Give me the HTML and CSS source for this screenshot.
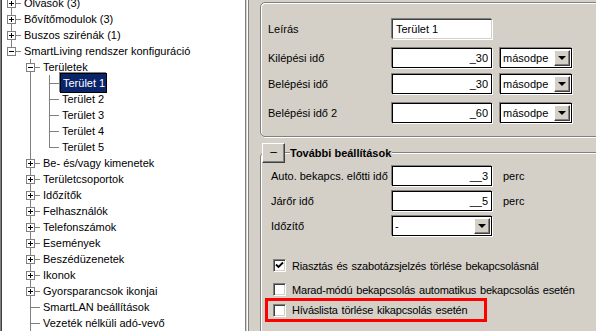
FILE: index.html
```html
<!DOCTYPE html>
<html>
<head>
<meta charset="utf-8">
<link rel="stylesheet" href="styles.css">
</head>
<body>
<div class="app">
  <div class="tree">
    <div class="list">
      <div class="row"><span class="g tee"><i class="box plus"></i></span><span class="lbl">Olvasók (3)</span></div>
      <div class="row"><span class="g tee"><i class="box plus"></i></span><span class="lbl">Bővítőmodulok (3)</span></div>
      <div class="row"><span class="g tee"><i class="box plus"></i></span><span class="lbl">Buszos szirénák (1)</span></div>
      <div class="row"><span class="g ell"><i class="box minus"></i></span><span class="lbl">SmartLiving rendszer konfiguráció</span></div>
      <div class="row"><span class="g"></span><span class="g tee"><i class="box minus"></i></span><span class="lbl">Területek</span></div>
      <div class="row"><span class="g"></span><span class="g pipe"></span><span class="g tee"></span><span class="lbl sel">Terület 1</span></div>
      <div class="row"><span class="g"></span><span class="g pipe"></span><span class="g tee"></span><span class="lbl">Terület 2</span></div>
      <div class="row"><span class="g"></span><span class="g pipe"></span><span class="g tee"></span><span class="lbl">Terület 3</span></div>
      <div class="row"><span class="g"></span><span class="g pipe"></span><span class="g tee"></span><span class="lbl">Terület 4</span></div>
      <div class="row"><span class="g"></span><span class="g pipe"></span><span class="g ell"></span><span class="lbl">Terület 5</span></div>
      <div class="row"><span class="g"></span><span class="g tee"><i class="box plus"></i></span><span class="lbl">Be- és/vagy kimenetek</span></div>
      <div class="row"><span class="g"></span><span class="g tee"><i class="box plus"></i></span><span class="lbl">Területcsoportok</span></div>
      <div class="row"><span class="g"></span><span class="g tee"><i class="box plus"></i></span><span class="lbl">Időzítők</span></div>
      <div class="row"><span class="g"></span><span class="g tee"><i class="box plus"></i></span><span class="lbl">Felhasználók</span></div>
      <div class="row"><span class="g"></span><span class="g tee"><i class="box plus"></i></span><span class="lbl">Telefonszámok</span></div>
      <div class="row"><span class="g"></span><span class="g tee"><i class="box plus"></i></span><span class="lbl">Események</span></div>
      <div class="row"><span class="g"></span><span class="g tee"><i class="box plus"></i></span><span class="lbl">Beszédüzenetek</span></div>
      <div class="row"><span class="g"></span><span class="g tee"><i class="box plus"></i></span><span class="lbl">Ikonok</span></div>
      <div class="row"><span class="g"></span><span class="g tee"><i class="box plus"></i></span><span class="lbl">Gyorsparancsok ikonjai</span></div>
      <div class="row"><span class="g"></span><span class="g tee"></span><span class="lbl">SmartLAN beállítások</span></div>
      <div class="row"><span class="g"></span><span class="g tee"></span><span class="lbl">Vezeték nélküli adó-vevő</span></div>
      <div class="row"><span class="g"></span><span class="g pipe"></span></div>
    </div>
  </div>
  <div class="splitter"></div>
  <div class="panel">
    <div class="group1">
      <div class="frow r1"><span class="lab">Leírás</span><span class="inp sunk">Terület 1</span></div>
      <div class="frow r2"><span class="lab">Kilépési idő</span><span class="inp num">_30</span><span class="sel unit"><span class="stext">másodpe</span><span class="arrow"></span></span></div>
      <div class="frow r3"><span class="lab">Belépési idő</span><span class="inp num">_30</span><span class="sel unit"><span class="stext">másodpe</span><span class="arrow"></span></span></div>
      <div class="frow r4"><span class="lab">Belépési idő 2</span><span class="inp num">_60</span><span class="sel unit"><span class="stext">másodpe</span><span class="arrow"></span></span></div>
    </div>
    <div class="group2">
      <div class="g2head"><span class="tgl">–</span><span class="gtitle">További beállítások</span></div>
      <div class="frow s1"><span class="lab2">Auto. bekapcs. előtti idő</span><span class="inp num">__3</span><span class="unitlbl">perc</span></div>
      <div class="frow s2"><span class="lab2">Járőr idő</span><span class="inp num">__5</span><span class="unitlbl">perc</span></div>
      <div class="frow s3"><span class="lab2">Időzítő</span><span class="sel wide"><span class="stext">-</span><span class="arrow"></span></span></div>
      <div class="cbrow c1"><span class="cb checked"><svg width="9" height="9" viewBox="0 0 9 9"><path d="M1 3.5 L3.5 6 L8 1.5" fill="none" stroke="#000" stroke-width="1.8"/></svg></span><span class="cbl">Riasztás és szabotázsjelzés törlése bekapcsolásnál</span></div>
      <div class="cbrow c2"><span class="cb"></span><span class="cbl">Marad-módú bekapcsolás automatikus bekapcsolás esetén</span></div>
      <div class="redbox"><span class="cb"></span><span class="cbl">Híváslista törlése kikapcsolás esetén</span></div>
    </div>
  </div>
</div>
</body>
</html>
```
FILE: styles.css
```css
html, body { margin: 0; padding: 0; }
body {
  font-family: "Liberation Sans", Arial, sans-serif;
  font-size: 11px;
  color: #000;
  background: #d4d0c8;
}
.app {
  display: flex;
  width: 596px;
  height: 331px;
  overflow: hidden;
}
.tree {
  width: 246px;
  flex: none;
  box-sizing: border-box;
  background: #fff;
  border-left: 1px solid #808080;
  border-right: 1px solid #808080;
  box-shadow: inset 1px 0 0 #404040;
  padding-left: 1px;
  overflow: hidden;
}
.list { margin-top: -5px; }
.row {
  display: flex;
  align-items: center;
  height: 16px;
  white-space: nowrap;
}
.g {
  width: 19px;
  height: 16px;
  flex: none;
  position: relative;
}
.g.pipe::before, .g.tee::before, .g.ell::before {
  content: "";
  position: absolute;
  left: 9px;
  top: 0;
  width: 1px;
  height: 16px;
  background: #808080;
}
.g.ell::before { height: 9px; }
.g.tee::after, .g.ell::after {
  content: "";
  position: absolute;
  left: 9px;
  right: 0;
  top: 8px;
  height: 1px;
  background: #808080;
}
.box {
  position: absolute;
  left: 5px;
  top: 4px;
  width: 9px;
  height: 9px;
  box-sizing: border-box;
  border: 1px solid #808080;
  background: #fff;
  z-index: 1;
}
.box::before {
  content: "";
  position: absolute;
  left: 1px;
  top: 3px;
  width: 5px;
  height: 1px;
  background: #000;
}
.box.plus::after {
  content: "";
  position: absolute;
  left: 3px;
  top: 1px;
  width: 1px;
  height: 5px;
  background: #000;
}
.lbl {
  margin-left: 1px;
  padding: 0 2px;
  line-height: 14px;
  height: 14px;
}
.lbl.sel {
  background: #0a246a;
  color: #fff;
}
.splitter {
  width: 6px;
  flex: none;
  background: linear-gradient(to right, #d4d0c8 0 1px, #fff 1px 2px, #808080 2px 3px, #d4d0c8 3px);
}
.panel {
  flex: 1;
  min-width: 0;
  padding: 2px 0 0 8px;
  overflow: hidden;
}
.group1 {
  height: 135px;
  box-sizing: border-box;
  border: 1px solid #808080;
  border-radius: 5px;
  box-shadow: inset 1px 1px 0 #fff, 1px 1px 0 #fff;
  margin-right: -12px;
  padding: 16px 0 0 7px;
}
.frow {
  display: flex;
  align-items: center;
  height: 20px;
}
.r2 { margin-top: 9px; }
.r3 { margin-top: 6px; }
.r4 { margin-top: 9px; }
.lab { width: 124px; flex: none; }
.inp {
  width: 100px;
  height: 20px;
  box-sizing: border-box;
  flex: none;
  background: #fff;
  border: 1px solid #000;
  box-shadow: -1px -1px 0 #808080, 1px 1px 0 #fff;
  line-height: 18px;
  padding: 0 3px;
  white-space: nowrap;
}
.inp.sunk {
  border-color: #404040 #d4d0c8 #d4d0c8 #404040;
}
.inp.num { text-align: right; }
.sel {
  display: flex;
  align-items: center;
  height: 20px;
  box-sizing: border-box;
  flex: none;
  background: #fff;
  border: 1px solid #000;
  box-shadow: -1px -1px 0 #808080, 1px 1px 0 #fff;
  padding: 0 1px 0 2px;
}
.sel.unit { width: 72px; margin-left: 8px; }
.sel.wide { width: 100px; }
.stext { flex: 1; line-height: 16px; white-space: nowrap; overflow: hidden; }
.arrow {
  width: 16px;
  height: 16px;
  box-sizing: border-box;
  flex: none;
  background: #d4d0c8;
  border: 1px solid;
  border-color: #fff #404040 #404040 #fff;
  box-shadow: inset -1px -1px 0 #808080;
  position: relative;
}
.arrow::after {
  content: "";
  position: absolute;
  left: 3px;
  top: 5px;
  border-left: 4px solid transparent;
  border-right: 4px solid transparent;
  border-top: 4px solid #000;
}
.group2 {
  margin-top: 15px;
  height: 200px;
  box-sizing: border-box;
  border: 1px solid #808080;
  border-radius: 5px 0 0 0;
  box-shadow: inset 1px 1px 0 #fff;
  margin-right: -12px;
}
.g2head {
  display: flex;
  align-items: center;
  margin-top: -10px;
  margin-left: 1px;
  height: 20px;
}
.tgl {
  width: 23px;
  height: 20px;
  box-sizing: border-box;
  background: #d4d0c8;
  border: 1px solid;
  border-color: #fff #404040 #404040 #fff;
  box-shadow: inset -1px -1px 0 #808080;
  text-align: center;
  line-height: 17px;
  font-size: 12px;
}
.gtitle {
  font-weight: bold;
  margin-left: 5px;
  padding-right: 1px;
  background: #d4d0c8;
  line-height: 14px;
}
.lab2 { width: 121px; flex: none; padding-left: 10px; }
.s1 { margin-top: 3px; }
.s2 { margin-top: 5px; }
.s3 { margin-top: 5px; }
.unitlbl { margin-left: 11px; }
.cbrow {
  display: flex;
  align-items: center;
  height: 13px;
  padding-left: 12px;
}
.c1 { margin-top: 23px; }
.c2 { margin-top: 11px; }
.cb {
  width: 13px;
  height: 13px;
  box-sizing: border-box;
  flex: none;
  background: #fff;
  border: 1px solid;
  border-color: #808080 #fff #fff #808080;
  box-shadow: inset 1px 1px 0 #404040, inset -1px -1px 0 #d4d0c8;
  display: flex;
  align-items: center;
  justify-content: center;
}
.cbl {
  margin-left: 6px;
  white-space: nowrap;
  word-spacing: 1px;
  letter-spacing: -0.2px;
}
.redbox {
  display: flex;
  align-items: center;
  width: 222px;
  height: 24px;
  box-sizing: border-box;
  margin-top: 2px;
  margin-left: 4px;
  border: 3px solid #ff0000;
  padding-left: 5px;
}
```
